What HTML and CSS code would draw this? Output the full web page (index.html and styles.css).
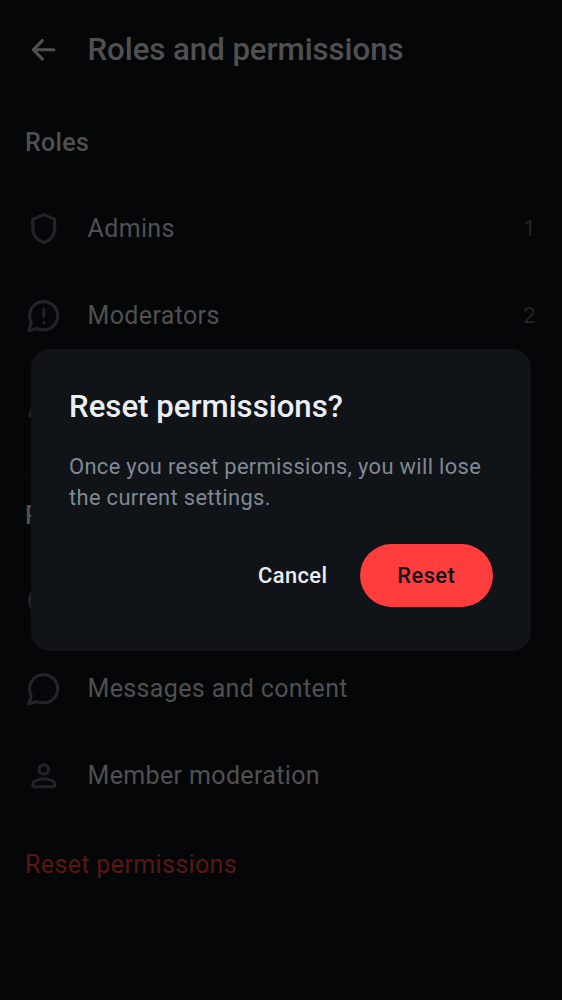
FILE: index.html
```html
<!DOCTYPE html>
<html lang="en">
<head>
<meta charset="utf-8">
<title>Roles and permissions</title>
<link rel="stylesheet" href="styles.css">
</head>
<body>
<main class="page">
  <header class="topbar">
    <svg class="icon back" viewBox="0 0 24 24"><path d="M18.500 12H5.400M11.100 6.100 5.300 12l5.800 5.900"/></svg>
    <h1 class="title">Roles and permissions</h1>
  </header>
  <section class="section roles">
    <h2 class="heading">Roles</h2>
    <div class="row">
      <svg class="icon" viewBox="0 0 24 24"><path d="M12 3 19 6v5.500c0 4.500-2.700 7.900-7 9.400-4.300-1.500-7-4.900-7-9.400V6z"/></svg>
      <span class="label">Admins</span><span class="count">1</span>
    </div>
    <div class="row">
      <svg class="icon" viewBox="0 0 24 24"><path d="M12 21a9 9 0 1 0-8.200-5.200c.2.400.2.700.1 1.100L2.400 21.600l4.700-1.300c.400-.1.700-.1 1.100.1A9 9 0 0 0 12 21z"/><path d="M12 8v4.200M12 16.300v.01"/></svg>
      <span class="label">Moderators</span><span class="count">2</span>
    </div>
    <div class="row">
      <svg class="icon" viewBox="0 0 24 24"><path d="M3.200 20.500 5 14.500Q5.500 13 7 13h4q1.500 0 2 1.500l1.800 6z"/><circle cx="9" cy="8" r="3"/></svg>
      <span class="label">Members</span>
    </div>
  </section>
  <section class="section">
    <h2 class="heading">Permissions</h2>
    <div class="row">
      <svg class="icon" viewBox="0 0 24 24"><circle cx="12" cy="12" r="9"/><path d="M12 11v5M12 8v.01"/></svg>
      <span class="label">Room details</span>
    </div>
    <div class="row">
      <svg class="icon" viewBox="0 0 24 24"><path d="M12 21a9 9 0 1 0-8.200-5.200c.2.400.2.700.1 1.100L2.400 21.600l4.700-1.300c.400-.1.700-.1 1.100.1A9 9 0 0 0 12 21z"/></svg>
      <span class="label">Messages and content</span>
    </div>
    <div class="row">
      <svg class="icon" viewBox="0 0 24 24"><circle cx="12" cy="8" r="3"/><path d="M5 17.200C5 15.400 8.200 14 12 14s7 1.400 7 3.200v.8q0 1-1 1H6q-1 0-1-1z"/></svg>
      <span class="label">Member moderation</span>
    </div>
  </section>
  <div class="row danger">Reset permissions</div>
</main>
<div class="overlay">
  <div class="dialog" role="dialog" aria-modal="true">
    <h2 class="dialog-title">Reset permissions?</h2>
    <p class="dialog-text">Once you reset permissions, you will lose the current settings.</p>
    <div class="actions">
      <button class="button cancel">Cancel</button>
      <button class="button reset">Reset</button>
    </div>
  </div>
</div>
</body>
</html>
```

FILE: styles.css
```css
* { box-sizing: border-box; }
body {
  margin: 0;
  background: #050608;
  font-family: Roboto, sans-serif;
  color: #505053;
}
.page { height: 1000px; overflow: hidden; }
.topbar {
  display: flex;
  align-items: center;
  gap: 25px;
  height: 100px;
  padding: 0 25px;
}
.icon {
  flex: none;
  width: 37.5px;
  height: 37.5px;
  fill: none;
  stroke: #222427;
  stroke-width: 2;
  stroke-linecap: round;
  stroke-linejoin: round;
}
.back { stroke: #505053; }
.title {
  margin: 0;
  font-size: 31.2px;
  font-weight: 500;
  line-height: 44px;
  letter-spacing: -0.04px;
}
.section { border-bottom: 1px solid #0a0b0d; }
.roles { padding-bottom: 25px; }
.heading {
  margin: 0;
  height: 84.6px;
  padding: 1px 25px 0;
  font-size: 25px;
  font-weight: 500;
  line-height: 84.4px;
  letter-spacing: 0.3px;
}
.row {
  display: flex;
  align-items: center;
  gap: 25px;
  height: 87.4px;
  padding: 0 25px;
  font-size: 25px;
  letter-spacing: 0.36px;
}
.label { flex: 1; }
.count { color: #222326; font-size: 21.9px; padding-right: 1px; }
.danger { height: 88px; color: #591717; }
.overlay {
  position: absolute;
  inset: 0;
  display: flex;
  align-items: center;
  justify-content: center;
}
.dialog {
  width: 500px;
  height: 302px;
  padding: 37.5px 38px;
  border-radius: 19px;
  background: #101317;
}
.dialog-title {
  margin: 0 0 25px;
  color: #ebeef2;
  font-size: 31.2px;
  font-weight: 500;
  line-height: 39px;
}
.dialog-text {
  margin: 0 0 31px;
  color: #808994;
  font-size: 21.9px;
  line-height: 31.2px;
  letter-spacing: 0.34px;
}
.actions { display: flex; justify-content: flex-end; gap: 13px; }
.button {
  height: 63px;
  padding: 0 19px;
  border: 0;
  border-radius: 32px;
  background: none;
  font: 500 21.9px Roboto, sans-serif;
  letter-spacing: 0.42px;
  color: #ebeef2;
}
.reset { padding: 0 37.8px; background: #ff3d3d; color: #101317; }
```
